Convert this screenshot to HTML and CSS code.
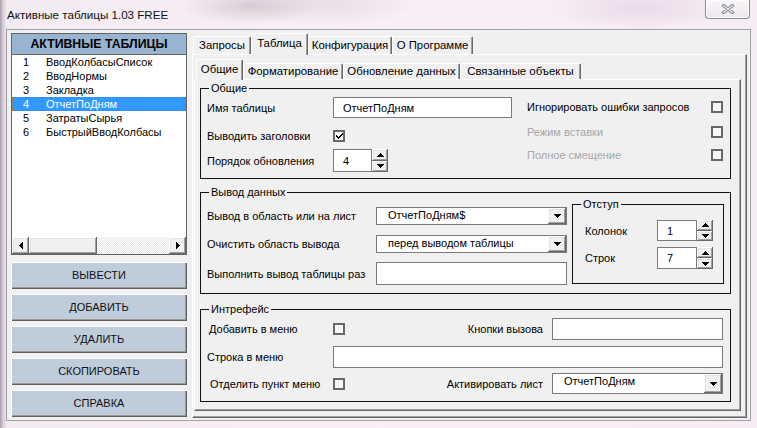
FILE: index.html
```html
<!DOCTYPE html>
<html lang="ru">
<head>
<meta charset="utf-8">
<title>Активные таблицы</title>
<link rel="stylesheet" href="styles.css">
</head>
<body>
<div class="window">
  <div class="titlebar">
    <span class="title">Активные таблицы 1.03 FREE</span>
    <div class="close">
      <svg width="14" height="10" viewBox="0 0 14 10"><path d="M2.5 1.5 L11.5 8.5 M11.5 1.5 L2.5 8.5" stroke="#7d7d84" stroke-width="3" stroke-linecap="round" fill="none"/><path d="M2.5 1.5 L11.5 8.5 M11.5 1.5 L2.5 8.5" stroke="#f4f2f5" stroke-width="1.2" stroke-linecap="round" fill="none"/></svg>
    </div>
  </div>
  <div class="client">
    <div class="leftpanel">
      <div class="listbox">
        <div class="lb-header">АКТИВНЫЕ ТАБЛИЦЫ</div>
        <div class="lb-items">
          <div class="lb-item"><span class="num">1</span><span>ВводКолбасыСписок</span></div>
          <div class="lb-item"><span class="num">2</span><span>ВводНормы</span></div>
          <div class="lb-item"><span class="num">3</span><span>Закладка</span></div>
          <div class="lb-item sel"><span class="num">4</span><span>ОтчетПоДням</span></div>
          <div class="lb-item"><span class="num">5</span><span>ЗатратыСырья</span></div>
          <div class="lb-item"><span class="num">6</span><span>БыстрыйВводКолбасы</span></div>
        </div>
        <div class="hscroll">
          <div class="sb-btn"><svg width="4" height="7" viewBox="0 0 4 7" shape-rendering="crispEdges"><path d="M0 3h1v-1h1v-1h1v-1h1v7h-1v-1h-1v-1h-1v-1h-1z"/></svg></div>
          <div class="sb-thumb"></div>
          <div class="sb-track"></div>
          <div class="sb-btn"><svg width="4" height="7" viewBox="0 0 4 7" shape-rendering="crispEdges"><path d="M0 0h1v1h1v1h1v1h1v1h-1v1h-1v1h-1v1h-1z"/></svg></div>
        </div>
      </div>
      <div class="buttons">
        <div class="btn">ВЫВЕСТИ</div>
        <div class="btn">ДОБАВИТЬ</div>
        <div class="btn">УДАЛИТЬ</div>
        <div class="btn">СКОПИРОВАТЬ</div>
        <div class="btn">СПРАВКА</div>
      </div>
    </div>

    <div class="mp-outer">
      <div class="tabs tabs-outer">
        <div class="tab t-zap">Запросы</div>
        <div class="tab active t-tab">Таблица</div>
        <div class="tab t-conf">Конфигурация</div>
        <div class="tab t-about">О Программе</div>
      </div>
      <div class="page page-outer">
        <div class="tabs tabs-inner">
          <div class="tab active t-ob">Общие</div>
          <div class="tab t-fmt">Форматирование</div>
          <div class="tab t-upd">Обновление данных</div>
          <div class="tab t-rel">Связанные объекты</div>
        </div>
        <div class="page page-inner">

          <div class="frame fr-general">
            <span class="fr-cap">Общие</span>
            <div class="g-left">
              <div class="row r1">
                <span class="lbl w126">Имя таблицы</span>
                <div class="textbox w179"><span class="tb-text">ОтчетПоДням</span></div>
              </div>
              <div class="row r2">
                <span class="lbl w126">Выводить заголовки</span>
                <div class="chk"><svg width="8" height="8" viewBox="0 0 8 8" shape-rendering="crispEdges"><path d="M1 3h1v1h1v1h1v-1h1v-1h1v-1h1v-1h1v2h-1v1h-1v1h-1v1h-1v1h-1v-1h-1v-1h-1z"/></svg></div>
              </div>
              <div class="row r3">
                <span class="lbl w126">Порядок обновления</span>
                <div class="spin">
                  <div class="textbox sp-box"><span class="tb-text">4</span></div>
                  <div class="sp-btns">
                    <div class="sp-btn"><svg width="7" height="4" viewBox="0 0 7 4" shape-rendering="crispEdges"><path d="M3 0h1v1h1v1h1v1h1v1h-7v-1h1v-1h1v-1h1z"/></svg></div>
                    <div class="sp-btn"><svg width="7" height="4" viewBox="0 0 7 4" shape-rendering="crispEdges"><path d="M0 0h7v1h-1v1h-1v1h-1v1h-1v-1h-1v-1h-1v-1h-1z"/></svg></div>
                  </div>
                </div>
              </div>
            </div>
            <div class="g-right">
              <div class="rrow rr1"><span class="lbl">Игнорировать ошибки запросов</span><div class="chk"></div></div>
              <div class="rrow rr2"><span class="lbl dis">Режим вставки</span><div class="chk"></div></div>
              <div class="rrow rr3"><span class="lbl dis">Полное смещение</span><div class="chk"></div></div>
            </div>
          </div>

          <div class="frame fr-output">
            <span class="fr-cap">Вывод данных</span>
            <div class="o-left">
              <div class="row o1">
                <span class="lbl w169">Вывод в область или на лист</span>
                <div class="combo w191"><span class="cb-text">ОтчетПоДням$</span><div class="cb-btn"><svg width="7" height="4" viewBox="0 0 7 4" shape-rendering="crispEdges"><path d="M0 0h7v1h-1v1h-1v1h-1v1h-1v-1h-1v-1h-1v-1h-1z"/></svg></div></div>
              </div>
              <div class="row o2">
                <span class="lbl w169">Очистить область вывода</span>
                <div class="combo w191"><span class="cb-text">перед выводом таблицы</span><div class="cb-btn"><svg width="7" height="4" viewBox="0 0 7 4" shape-rendering="crispEdges"><path d="M0 0h7v1h-1v1h-1v1h-1v1h-1v-1h-1v-1h-1v-1h-1z"/></svg></div></div>
              </div>
              <div class="row o3">
                <span class="lbl w169">Выполнить вывод таблицы раз</span>
                <div class="textbox w191 h23"></div>
              </div>
            </div>
            <div class="frame fr-indent">
              <span class="fr-cap">Отступ</span>
              <div class="row i1">
                <span class="lbl w72">Колонок</span>
                <div class="spin">
                  <div class="textbox sp-box2 h21"><span class="tb-text">1</span></div>
                  <div class="sp-btns h21">
                    <div class="sp-btn"><svg width="7" height="4" viewBox="0 0 7 4" shape-rendering="crispEdges"><path d="M3 0h1v1h1v1h1v1h1v1h-7v-1h1v-1h1v-1h1z"/></svg></div>
                    <div class="sp-btn"><svg width="7" height="4" viewBox="0 0 7 4" shape-rendering="crispEdges"><path d="M0 0h7v1h-1v1h-1v1h-1v1h-1v-1h-1v-1h-1v-1h-1z"/></svg></div>
                  </div>
                </div>
              </div>
              <div class="row i2">
                <span class="lbl w72">Строк</span>
                <div class="spin">
                  <div class="textbox sp-box2 h22"><span class="tb-text">7</span></div>
                  <div class="sp-btns h22">
                    <div class="sp-btn"><svg width="7" height="4" viewBox="0 0 7 4" shape-rendering="crispEdges"><path d="M3 0h1v1h1v1h1v1h1v1h-7v-1h1v-1h1v-1h1z"/></svg></div>
                    <div class="sp-btn"><svg width="7" height="4" viewBox="0 0 7 4" shape-rendering="crispEdges"><path d="M0 0h7v1h-1v1h-1v1h-1v1h-1v-1h-1v-1h-1v-1h-1z"/></svg></div>
                  </div>
                </div>
              </div>
            </div>
          </div>

          <div class="frame fr-ui">
            <span class="fr-cap">Интрефейс</span>
            <div class="row u1">
              <span class="lbl w126 pl2">Добавить в меню</span>
              <div class="chk"></div>
              <span class="lbl rlbl">Кнопки вызова</span>
              <div class="textbox w171 h22"></div>
            </div>
            <div class="row u2">
              <span class="lbl w126">Строка в меню</span>
              <div class="textbox grow h22"></div>
            </div>
            <div class="row u3">
              <span class="lbl w126 pl3">Отделить пункт меню</span>
              <div class="chk"></div>
              <span class="lbl rlbl">Активировать лист</span>
              <div class="combo w171 h21"><span class="cb-text">ОтчетПоДням</span><div class="cb-btn"><svg width="7" height="4" viewBox="0 0 7 4" shape-rendering="crispEdges"><path d="M0 0h7v1h-1v1h-1v1h-1v1h-1v-1h-1v-1h-1v-1h-1z"/></svg></div></div>
            </div>
          </div>

        </div>
      </div>
    </div>
  </div>
</div>
</body>
</html>
```

FILE: styles.css
```css
* { box-sizing: border-box; }
html, body { margin: 0; padding: 0; }
body {
  width: 757px;
  height: 428px;
  overflow: hidden;
  font-family: "Liberation Sans", Arial, sans-serif;
  font-size: 11px;
  color: #000;
}
.window {
  width: 757px;
  height: 428px;
  display: flex;
  flex-direction: column;
  background:
    radial-gradient(ellipse 70px 18px at 250px 6px, rgba(140, 120, 140, 0.28), transparent),
    radial-gradient(ellipse 90px 22px at 330px 4px, rgba(170, 140, 165, 0.18), transparent),
    radial-gradient(ellipse 90px 22px at 640px 8px, rgba(190, 150, 185, 0.22), transparent),
    linear-gradient(90deg, #a99dab 0, #d8cdd9 3px, #f3ebf2 7px, #f8eff7 50%, #f6ecf4 100%);
}
.titlebar {
  height: 29px;
  flex: none;
  display: flex;
  align-items: flex-start;
}
.title {
  padding: 8px 0 0 7px;
  line-height: 14px;
  font-size: 11.6px;
  color: #111;
}
.close {
  margin: 0 7px 0 auto;
  width: 45px;
  height: 19px;
  border: 1px solid #8d8a92;
  border-top: none;
  border-radius: 0 0 4px 4px;
  background: linear-gradient(#f9f6f9, #ebe6ec);
  box-shadow: inset 0 0 0 1px rgba(255,255,255,0.8);
  display: flex;
  align-items: center;
  justify-content: center;
}
.client {
  margin-left: 6px;
  width: 745px;
  height: 392px;
  border: 1px solid #a3a0a5;
  background: #f0f0f0;
  display: flex;
  padding: 3px 0 0 4px;
}

/* left panel */
.leftpanel {
  width: 176px;
  flex: none;
  display: flex;
  flex-direction: column;
}
.listbox {
  height: 222px;
  border: 1px solid #646464;
  background: #fff;
  display: flex;
  flex-direction: column;
}
.lb-header {
  height: 21px;
  flex: none;
  background: #99b4d1;
  border-bottom: 1px solid #646464;
  text-align: center;
  font-weight: bold;
  font-size: 12.3px;
  line-height: 20px;
  color: #000;
}
.lb-items { flex: 1; }
.lb-item {
  height: 14px;
  line-height: 14px;
  display: flex;
  padding-left: 11px;
  font-size: 11px;
}
.lb-item .num { width: 23px; }
.lb-item.sel {
  background: #3399ff;
  color: #fff;
  outline: 1px dotted #cc6600;
  outline-offset: -1px;
}
.hscroll {
  height: 17px;
  flex: none;
  display: flex;
}
.sb-btn, .sb-thumb, .sp-btn, .cb-btn {
  background: #f0f0f0;
  box-shadow: inset -1px -1px #696969, inset 1px 1px #fff, inset -2px -2px #a0a0a0, inset 2px 2px #e3e3e3;
}
.sb-btn {
  width: 17px;
  flex: none;
  display: flex;
  align-items: center;
  justify-content: center;
}
.sb-thumb { width: 68px; flex: none; }
.sb-track {
  flex: 1;
  background-color: #fff;
  background-image: repeating-conic-gradient(#e6e6e6 0 25%, #fff 0 50%);
  background-size: 2px 2px;
}
.buttons {
  margin-top: 7px;
  display: flex;
  flex-direction: column;
  gap: 5px;
}
.btn {
  height: 27px;
  background: #bfcddb;
  box-shadow: inset 1px 1px #fff, inset -1px -1px #5f5f5f, inset -2px -2px #9a9a9a;
  text-align: center;
  line-height: 27px;
  font-size: 11px;
  color: #111;
}

/* multipage */
.mp-outer {
  margin-left: 5px;
  width: 555px;
  flex: none;
  display: flex;
  flex-direction: column;
}
.tabs {
  display: flex;
  align-items: flex-end;
  position: relative;
  z-index: 1;
}
.tab {
  background: #f0f0f0;
  border-top: 1px solid #fff;
  border-left: 1px solid #fff;
  border-right: 1px solid #696969;
  box-shadow: inset -1px 0 #a0a0a0;
  border-radius: 2px 2px 0 0;
  text-align: center;
  white-space: nowrap;
  font-size: 11.4px;
}
.tabs-outer {
  height: 21px;
  padding-left: 1px;
}
.tabs-outer .tab { height: 18px; line-height: 17px; }
.tabs-outer .tab.active { height: 22px; margin-bottom: -1px; line-height: 19px; }
.t-zap { width: 58px; }
.t-tab { width: 57px; }
.t-conf { width: 84px; }
.t-about { width: 81px; }

.page {
  background: #f0f0f0;
  border: 1px solid;
  border-color: #fff #696969 #696969 #fff;
  box-shadow: inset -1px -1px #a0a0a0;
}
.page-outer {
  height: 364px;
  padding: 4px 0 0 1px;
}
.tabs-inner {
  height: 20px;
  padding-left: 2px;
}
.tabs-inner .tab { height: 16px; line-height: 15px; }
.tabs-inner .tab.active { height: 21px; margin-bottom: -1px; line-height: 18px; }
.t-ob { width: 47px; }
.t-fmt { width: 100px; }
.t-upd { width: 117px; }
.t-rel { width: 121px; }
.page-inner {
  width: 547px;
  height: 332px;
  padding: 8px 0 0 5px;
}

/* frames */
.frame {
  position: relative;
  border: 1px solid #111;
  display: flex;
}
.fr-cap {
  position: absolute;
  top: -8px;
  left: 8px;
  padding: 0 2px;
  line-height: 14px;
  background: #f0f0f0;
}
.fr-general { width: 531px; height: 91px; }
.fr-output { width: 531px; height: 102px; margin-top: 13px; }
.fr-ui { width: 531px; height: 93px; margin-top: 15px; flex-direction: column; padding: 0 7px 0 6px; }

.row { display: flex; align-items: center; }
.lbl { white-space: nowrap; }
.lbl.dis { color: #a7a7a7; }
.w126 { width: 126px; flex: none; }
.w169 { width: 169px; flex: none; }
.w72 { width: 72px; flex: none; }
.w179 { width: 179px; }
.w191 { width: 191px; }
.w171 { width: 171px; }
.grow { flex: 1; }
.h21 { height: 21px !important; }
.h22 { height: 22px !important; }
.h23 { height: 23px !important; }
.pl2 { padding-left: 2px; }
.pl3 { padding-left: 3px; }

.textbox {
  height: 21px;
  background: #fff;
  border: 1px solid #7a7a7a;
  display: flex;
  align-items: center;
  flex: none;
}
.textbox.grow { flex: 1; }
.tb-text { padding-left: 9px; }

.chk {
  width: 12px;
  height: 12px;
  flex: none;
  border: 2px solid #686868;
  background: #f7f7f7;
  display: flex;
  align-items: center;
  justify-content: center;
}

.g-left { width: 326px; flex: none; padding-left: 6px; display: flex; flex-direction: column; }
.g-left .r1 { margin-top: 8px; height: 21px; }
.g-left .r2 { margin-top: 12px; height: 11px; }
.g-left .r3 { margin-top: 8px; height: 23px; }
.g-right { width: 196px; flex: none; display: flex; flex-direction: column; }
.rrow { display: flex; align-items: center; justify-content: space-between; height: 20px; }
.rr1 { margin-top: 8px; }
.rr2 { margin-top: 5px; }
.rr3 { margin-top: 3px; }

.spin { display: flex; }
.sp-box { width: 39px; height: 23px; }
.sp-box2 { width: 40px; }
.sp-btns { width: 16px; height: 23px; display: flex; flex-direction: column; }
.sp-btn { flex: 1; display: flex; align-items: center; justify-content: center; }
.sp-btn svg, .cb-btn svg, .sb-btn svg { fill: #000; }

.o-left { width: 371px; flex: none; padding-left: 6px; display: flex; flex-direction: column; }
.o-left .o1 { margin-top: 14px; height: 18px; }
.o-left .o2 { margin-top: 10px; height: 18px; }
.o-left .o3 { margin-top: 9px; height: 23px; }

.combo {
  height: 18px;
  background: #fff;
  border: 1px solid #7a7a7a;
  display: flex;
  flex: none;
}
.cb-text { flex: 1; padding-left: 11px; line-height: 15px; white-space: nowrap; }
.cb-btn { width: 18px; display: flex; align-items: center; justify-content: center; }

.fr-indent {
  width: 152px;
  height: 80px;
  margin-top: 11px;
  flex-direction: column;
  padding-left: 12px;
}
.fr-indent .i1 { margin-top: 15px; height: 21px; }
.fr-indent .i2 { margin-top: 6px; height: 22px; }

.fr-ui .u1 { margin-top: 8px; height: 22px; }
.fr-ui .u2 { margin-top: 6px; height: 22px; }
.fr-ui .u3 { margin-top: 5px; height: 21px; }
.rlbl { margin-left: auto; margin-right: 9px; }
```
